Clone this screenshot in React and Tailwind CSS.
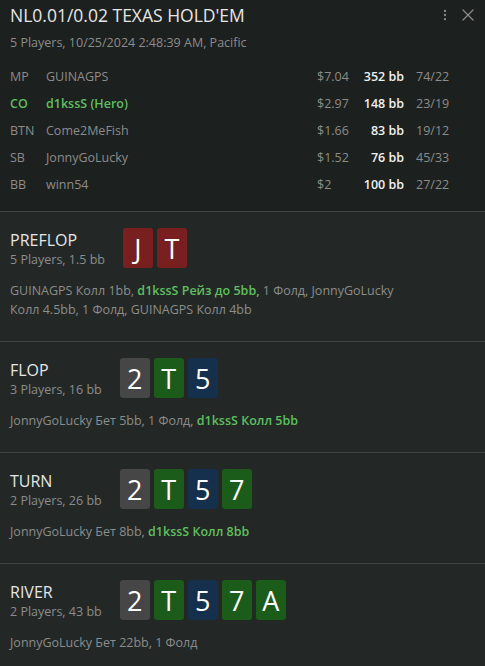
import { X, EllipsisVertical } from 'lucide-react';

const players = [
  { pos: 'MP', name: 'GUINAGPS', money: '$7.04', bb: '352 bb', stat: '74/22' },
  { pos: 'CO', name: 'd1kssS (Hero)', money: '$2.97', bb: '148 bb', stat: '23/19', hero: true },
  { pos: 'BTN', name: 'Come2MeFish', money: '$1.66', bb: '83 bb', stat: '19/12' },
  { pos: 'SB', name: 'JonnyGoLucky', money: '$1.52', bb: '76 bb', stat: '45/33' },
  { pos: 'BB', name: 'winn54', money: '$2', bb: '100 bb', stat: '27/22' },
];

const cardColors = {
  red: 'bg-[#7a1f1f]',
  gray: 'bg-[#464646]',
  green: 'bg-[#1b5c1a]',
  blue: 'bg-[#15304c]',
};

const board = [
  { rank: '2', color: 'gray' },
  { rank: 'T', color: 'green' },
  { rank: '5', color: 'blue' },
  { rank: '7', color: 'green' },
  { rank: 'A', color: 'green' },
];

const streets = [
  {
    name: 'PREFLOP',
    info: '5 Players, 1.5 bb',
    cards: [{ rank: 'J', color: 'red' }, { rank: 'T', color: 'red' }],
    actions: [
      { text: 'GUINAGPS Колл 1bb, ' },
      { text: 'd1kssS Рейз до 5bb,', hero: true },
      { text: ' 1 Фолд, JonnyGoLucky Колл 4.5bb, 1 Фолд, GUINAGPS Колл 4bb' },
    ],
  },
  {
    name: 'FLOP',
    info: '3 Players, 16 bb',
    cards: board.slice(0, 3),
    actions: [
      { text: 'JonnyGoLucky Бет 5bb, 1 Фолд, ' },
      { text: 'd1kssS Колл 5bb', hero: true },
    ],
  },
  {
    name: 'TURN',
    info: '2 Players, 26 bb',
    cards: board.slice(0, 4),
    actions: [
      { text: 'JonnyGoLucky Бет 8bb, ' },
      { text: 'd1kssS Колл 8bb', hero: true },
    ],
  },
  {
    name: 'RIVER',
    info: '2 Players, 43 bb',
    cards: board,
    actions: [{ text: 'JonnyGoLucky Бет 22bb, 1 Фолд' }],
  },
];

function Card({ rank, color }) {
  return (
    <div className={`${cardColors[color]} w-[30px] h-[40px] rounded-[3px] flex items-center justify-center text-[27px] text-white leading-none`}>
      {rank}
    </div>
  );
}

export default function App() {
  return (
    <div className="w-[485px] h-[666px] overflow-hidden bg-[#232826] font-['Open_Sans',sans-serif]">
      <div className="bg-[#1c201e] border-b border-[#3e4341] pt-[3px] pb-[12px]">
        <div className="flex items-start justify-between pl-[10px] pr-[7px]">
          <div>
            <h1 className="text-[17.5px] leading-[24px] text-[#e6e6e6]">NL0.01/0.02 TEXAS HOLD'EM</h1>
            <p className="text-[12.5px] leading-[18px] mt-[7px] text-[#8c8c8c]">5 Players, 10/25/2024 2:48:39 AM, Pacific</p>
          </div>
          <div className="flex items-center gap-[6px] pt-[2px] text-[#8a8a8a]">
            <EllipsisVertical className="w-[14px] h-[14px]" strokeWidth={2} />
            <X className="w-[20px] h-[20px]" strokeWidth={1.5} />
          </div>
        </div>
        <div className="mt-[12px] flex flex-col text-[12.5px]">
          {players.map((p) => (
            <div key={p.pos} className="flex items-center h-[27px] pl-[10px]">
              <span className={`w-[36px] ${p.hero ? 'text-[#5fbf5f] font-semibold' : 'text-[#8c8c8c]'}`}>{p.pos}</span>
              <span className={`w-[271px] ${p.hero ? 'text-[#5fbf5f] font-semibold' : 'text-[#8c8c8c]'}`}>{p.name}</span>
              <span className="w-[42px] text-[#8c8c8c]">{p.money}</span>
              <span className="w-[45px] text-right font-semibold text-[#f0f0f0]">{p.bb}</span>
              <span className="ml-[12px] text-[#8c8c8c]">{p.stat}</span>
            </div>
          ))}
        </div>
      </div>
      {streets.map((s) => (
        <div key={s.name} className="border-b border-[#3e4341] pt-[16px] pb-[22px] px-[10px]">
          <div className="flex items-center gap-[18px] h-[40px]">
            <div className="flex flex-col pt-[3px]">
              <span className="text-[16px] leading-[19px] text-[#e6e6e6]">{s.name}</span>
              <span className="text-[12.5px] leading-[19px] text-[#8c8c8c]">{s.info}</span>
            </div>
            <div className="flex gap-[4px]">
              {s.cards.map((c, i) => (
                <Card key={i} rank={c.rank} color={c.color} />
              ))}
            </div>
          </div>
          <p className="mt-[13px] text-[12.5px] leading-[19px] text-[#8c8c8c] pr-[60px]">
            {s.actions.map((a, i) => (
              <span key={i} className={a.hero ? 'text-[#5fbf5f] font-semibold' : ''}>{a.text}</span>
            ))}
          </p>
        </div>
      ))}
    </div>
  );
}
